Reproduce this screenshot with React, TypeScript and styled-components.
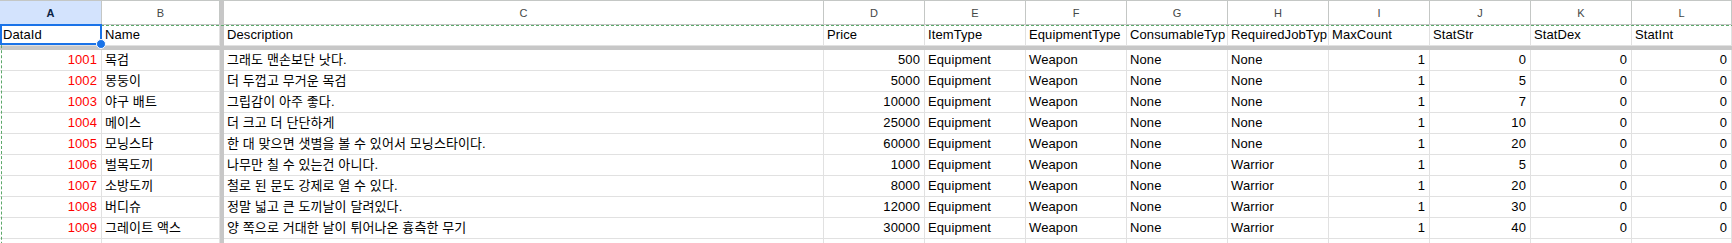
import React from 'react';
import styled, { createGlobalStyle } from 'styled-components';

const GlobalStyle = createGlobalStyle`
  html, body {
    margin: 0;
    padding: 0;
    background: #fff;
    overflow: hidden;
  }
`;

const COLS = '102px 118px 4px 600px repeat(8, 101px) 1fr';

interface Column {
  letter: string;
  title: string;
  numeric: boolean;
}

// header titles are shown as the sheet clips them
const columns: Column[] = [
  { letter: 'A', title: 'DataId', numeric: true },
  { letter: 'B', title: 'Name', numeric: false },
  { letter: 'C', title: 'Description', numeric: false },
  { letter: 'D', title: 'Price', numeric: true },
  { letter: 'E', title: 'ItemType', numeric: false },
  { letter: 'F', title: 'EquipmentType', numeric: false },
  { letter: 'G', title: 'ConsumableTyp', numeric: false },
  { letter: 'H', title: 'RequiredJobTyp', numeric: false },
  { letter: 'I', title: 'MaxCount', numeric: true },
  { letter: 'J', title: 'StatStr', numeric: true },
  { letter: 'K', title: 'StatDex', numeric: true },
  { letter: 'L', title: 'StatInt', numeric: true },
];

const rows: (string | number)[][] = [
  [1001, '목검', '그래도 맨손보단 낫다.', 500, 'Equipment', 'Weapon', 'None', 'None', 1, 0, 0, 0],
  [1002, '몽둥이', '더 두껍고 무거운 목검', 5000, 'Equipment', 'Weapon', 'None', 'None', 1, 5, 0, 0],
  [1003, '야구 배트', '그립감이 아주 좋다.', 10000, 'Equipment', 'Weapon', 'None', 'None', 1, 7, 0, 0],
  [1004, '메이스', '더 크고 더 단단하게', 25000, 'Equipment', 'Weapon', 'None', 'None', 1, 10, 0, 0],
  [1005, '모닝스타', '한 대 맞으면 샛별을 볼 수 있어서 모닝스타이다.', 60000, 'Equipment', 'Weapon', 'None', 'None', 1, 20, 0, 0],
  [1006, '벌목도끼', '나무만 칠 수 있는건 아니다.', 1000, 'Equipment', 'Weapon', 'None', 'Warrior', 1, 5, 0, 0],
  [1007, '소방도끼', '철로 된 문도 강제로 열 수 있다.', 8000, 'Equipment', 'Weapon', 'None', 'Warrior', 1, 20, 0, 0],
  [1008, '버디슈', '정말 넓고 큰 도끼날이 달려있다.', 12000, 'Equipment', 'Weapon', 'None', 'Warrior', 1, 30, 0, 0],
  [1009, '그레이트 액스', '양 쪽으로 거대한 날이 튀어나온 흉측한 무기', 30000, 'Equipment', 'Weapon', 'None', 'Warrior', 1, 40, 0, 0],
  ['', '', '', '', '', '', '', '', '', '', '', ''],
];

export default function App() {
  return (
    <>
      <GlobalStyle />
      <Sheet>
        <HeaderRow>
          {columns.map((c, i) => (
            <React.Fragment key={c.letter}>
              {i === 2 && <FreezeCol />}
              <ColHead active={i === 0}>{c.letter}</ColHead>
            </React.Fragment>
          ))}
        </HeaderRow>
        <Body>
          <Row>
            {columns.map((c, i) => (
              <React.Fragment key={c.letter}>
                {i === 2 && <FreezeCol />}
                <Cell numeric={false}>
                  {i === 0 && <Selection><Handle /></Selection>}
                  {c.title}
                </Cell>
              </React.Fragment>
            ))}
          </Row>
          <FreezeRow />
          {rows.map((r, ri) => (
            <Row key={ri}>
              {r.map((v, i) => (
                <React.Fragment key={i}>
                  {i === 2 && <FreezeCol />}
                  <Cell numeric={columns[i].numeric} red={i === 0}>{v}</Cell>
                </React.Fragment>
              ))}
            </Row>
          ))}
          <Marquee />
        </Body>
      </Sheet>
    </>
  );
}

const Sheet = styled.div`
  width: 1732px;
  height: 243px;
  overflow: hidden;
  font-family: 'Liberation Sans', Arial, 'Noto Sans CJK KR', sans-serif;
  background: #fff;
`;

const HeaderRow = styled.div`
  display: grid;
  grid-template-columns: ${COLS};
  height: 25px;
  box-sizing: border-box;
  border-top: 1px solid #c4c7c5;
  border-bottom: 1px solid #c4c7c5;
`;

const ColHead = styled.div<{ active: boolean }>`
  display: flex;
  align-items: center;
  justify-content: center;
  box-sizing: border-box;
  border-right: 1px solid #c4c7c5;
  background: ${p => p.active ? '#d3e3fd' : '#fff'};
  color: ${p => p.active ? '#0b1f44' : '#444746'};
  font-weight: ${p => p.active ? 700 : 400};
  font-size: 11px;
`;

const FreezeCol = styled.div`
  background: #c7c7c7;
`;

const Body = styled.div`
  position: relative;
`;

const Row = styled.div`
  display: grid;
  grid-template-columns: ${COLS};
  height: 21px;
`;

const FreezeRow = styled.div`
  height: 4px;
  background: #c7c7c7;
`;

const Cell = styled.div<{ numeric: boolean; red?: boolean }>`
  position: relative;
  box-sizing: border-box;
  border-right: 1px solid #e1e1e1;
  border-bottom: 1px solid #e1e1e1;
  padding: 0 4px 0 3px;
  font-size: 13px;
  line-height: 20px;
  color: ${p => p.red ? '#ff0000' : '#000'};
  text-align: ${p => p.numeric ? 'right' : 'left'};
  white-space: nowrap;
  letter-spacing: 0.1px;
`;

const Selection = styled.div`
  position: absolute;
  left: 0;
  top: -1px;
  right: -1px;
  bottom: 0;
  border: 2px solid #1a73e8;
  pointer-events: none;
  z-index: 3;
`;

const Handle = styled.div`
  position: absolute;
  right: -6px;
  bottom: -6px;
  width: 8px;
  height: 8px;
  border-radius: 50%;
  background: #1a73e8;
  border: 1px solid #fff;
`;

const Marquee = styled.div`
  position: absolute;
  left: 1px;
  top: 0;
  right: -2px;
  bottom: -10px;
  border: 1px dashed #5ca86a;
  pointer-events: none;
  z-index: 2;
`;
